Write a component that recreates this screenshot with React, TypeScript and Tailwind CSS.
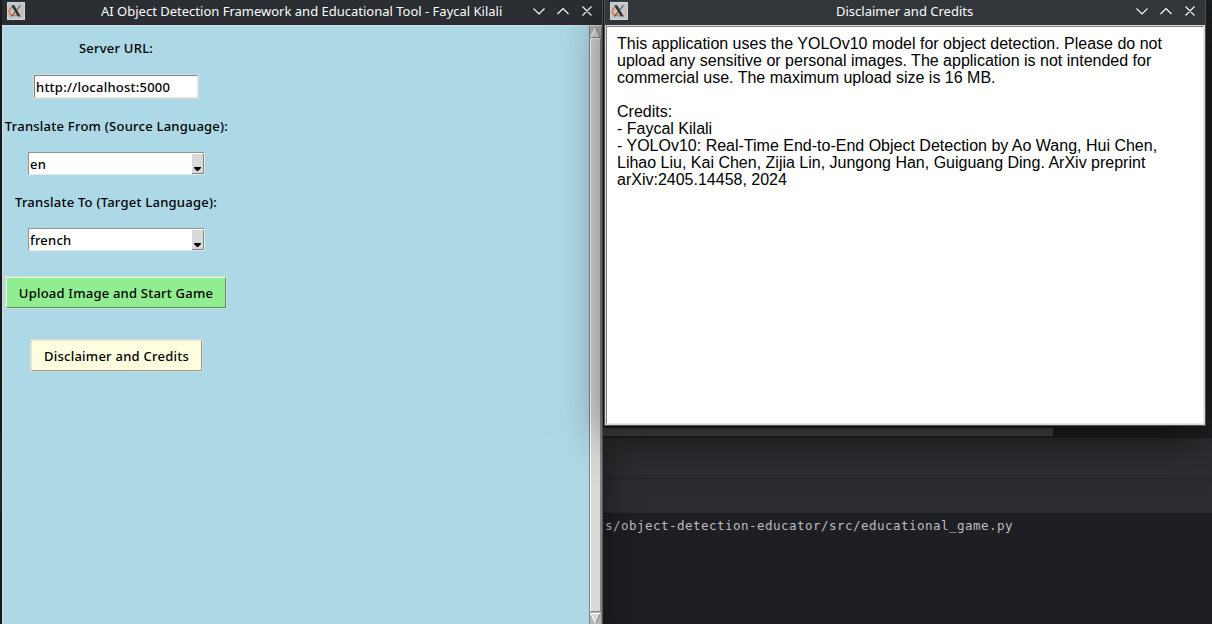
import type { ReactNode } from "react";

function XLogo() {
  return (
    <svg className="block h-[18px] w-[18px] shrink-0" viewBox="0 0 18 18">
      <rect x="0.5" y="0.5" width="17" height="17" fill="#c0c7ca" stroke="#ced3d5" />
      <path d="M7.500 5C4.500 5.200 2.300 7 2.300 9.600c0 2.600 2.200 4.200 5 4.200 2 0 3.600-.8 4.400-2" fill="none" stroke="#e5793f" strokeWidth="1.600" />
      <path d="M11.500 5.200c2.700.2 4.400 1.900 4.200 4.100-.2 2.400-2.200 4.200-5 4.500" fill="none" stroke="#e6b98c" strokeWidth="1.300" />
      <path d="M4.200 3.200h3l6.600 11.300h-3z" fill="#303438" />
      <path d="M13.600 3.200L4.400 14.500" stroke="#303438" strokeWidth="1" />
    </svg>
  );
}

function TitleBar({ title, tone, titleClass }: { title: string; tone: string; titleClass: string }) {
  return (
    <div className={`relative flex h-[25px] shrink-0 items-start justify-between pt-0.5 pl-[5px] ${tone}`}>
      <XLogo />
      <span className={`absolute top-[2px] whitespace-nowrap text-[13px] leading-[18px] text-[#fcfcfc] ${titleClass}`}>
        {title}
      </span>
      <svg className="mr-[9px] block h-[18px] w-[61px]" viewBox="0 0 61 18" fill="none" stroke="#fcfcfc" strokeWidth="1.150">
        <path d="M1.500 6.500l5.500 5.500 5.500-5.500M25.500 12l5.500-5.500L36.500 12M50.500 4.500l9 9M59.500 4.500l-9 9" />
      </svg>
    </div>
  );
}

function Label({ children, className }: { children: ReactNode; className: string }) {
  return <div className={`h-[18px] whitespace-nowrap leading-[18px] ${className}`}>{children}</div>;
}

function Select({ value, className }: { value: string; className: string }) {
  return (
    <div className={`flex h-[23px] w-[177px] border border-t-[#929292] border-r-[#e8e8e8] border-b-[#e8e8e8] border-l-[#929292] bg-white ${className}`}>
      <span className="flex-1 pl-[1.500px] leading-[23px]">{value}</span>
      <span className="mt-px flex h-5 w-[12px] items-end justify-center border-r border-b border-[#858585] bg-[#d9d9d9] pb-[2px]">
        <svg className="h-[4px] w-[7px]" viewBox="0 0 7 4">
          <path d="M0 0h7v1L4 4H3L0 1z" fill="#000" />
        </svg>
      </span>
    </div>
  );
}

function Scrollbar() {
  return (
    <div className="flex w-[13px] shrink-0 flex-col border-x border-[#828282] bg-[#b3b3b3]">
      <svg className="h-[12px] w-[11px] shrink-0" viewBox="0 0 11 12">
        <path d="M5.500 1L10.500 11.500H.5z" fill="#d9d9d9" />
        <path d="M5.500 1L.5 11.500" stroke="#fff" />
        <path d="M5.500 1l5 10.500H.5" fill="none" stroke="#828282" />
      </svg>
      <div className="flex-1 border border-t-white border-r-[#828282] border-b-[#828282] border-l-white bg-[#d9d9d9]" />
      <svg className="h-[12px] w-[11px] shrink-0" viewBox="0 0 11 12">
        <path d="M.5 1.500h10L5.500 11.500z" fill="#d9d9d9" />
        <path d="M10.500 1.500l-5 10" stroke="#828282" />
        <path d="M10.500 1.500H.5l5 10" fill="none" stroke="#fff" />
      </svg>
    </div>
  );
}

function GameWindow() {
  return (
    <section className="absolute top-0 left-[2px] flex h-[640px] w-[601px] flex-col border-r border-[#53575a] shadow-[0_14px_36px_rgba(0,0,0,0.45)]">
      <TitleBar
        title="AI Object Detection Framework and Educational Tool - Faycal Kilali"
        tone="bg-[#2a2e32]"
        titleClass="left-[99px]"
      />
      <div className="flex h-[599px] border-t border-l border-[#d9d9d9] bg-[#add8e6]">
        <div className="flex-1">
          <div className="flex w-[226px] flex-col items-center pt-[13px] text-[13px] font-medium tracking-[0.24px] text-black">
            <Label className="">Server URL:</Label>
            <div className="mt-[17px] h-[25px] w-[166px] border border-[#d9d9d9] bg-white">
              <div className="h-[23px] border border-t-[#828282] border-r-[#e8e8e8] border-b-[#e8e8e8] border-l-[#828282] pl-px leading-[23px]">
                http://localhost:5000
              </div>
            </div>
            <Label className="mt-[18px] pl-px">Translate From (Source Language):</Label>
            <Select value="en" className="mt-[17px]" />
            <Label className="mt-[18px]">Translate To (Target Language):</Label>
            <Select value="french" className="mt-[17px]" />
            <button className="mt-[25px] h-[33px] w-[222px] shrink-0 border border-[#d9d9d9] tracking-[0.22px]">
              <span className="block h-[31px] border border-t-[#d9ffd9] border-r-[#579057] border-b-[#579057] border-l-[#d9ffd9] bg-[#90ee90] leading-[31px] whitespace-nowrap">
                Upload Image and Start Game
              </span>
            </button>
            <button className="mt-[30px] h-[33px] w-[173px] shrink-0 border border-[#d9d9d9] tracking-[0.24px]">
              <span className="block h-[31px] border border-t-[#e9e9d2] border-r-[#999987] border-b-[#999987] border-l-[#e9e9d2] bg-[#ffffe0] pl-px leading-[30px] whitespace-nowrap">
                Disclaimer and Credits
              </span>
            </button>
          </div>
        </div>
        <Scrollbar />
      </div>
    </section>
  );
}

function DisclaimerWindow() {
  return (
    <section className="absolute top-0 left-[605px] flex h-[425px] w-[600px] flex-col shadow-[0_0_0_1px_#4c5155,0_12px_40px_rgba(0,0,0,0.55)]">
      <TitleBar title="Disclaimer and Credits" tone="bg-[#31363b]" titleClass="left-[231px]" />
      <div className="flex-1 border border-[#d9d9d9] bg-white">
        <div className="h-full border border-t-[#828282] border-r-[#e8e8e8] border-b-[#e8e8e8] border-l-[#828282] pt-[8px] pl-[10px] font-['Liberation_Sans',sans-serif] text-[16px] leading-[17px] whitespace-pre text-black">
          {`This application uses the YOLOv10 model for object detection. Please do not
upload any sensitive or personal images. The application is not intended for
commercial use. The maximum upload size is 16 MB.

Credits:
- Faycal Kilali
- YOLOv10: Real-Time End-to-End Object Detection by Ao Wang, Hui Chen,
Lihao Liu, Kai Chen, Zijia Lin, Jungong Han, Guiguang Ding. ArXiv preprint
arXiv:2405.14458, 2024`}
        </div>
      </div>
    </section>
  );
}

function EditorBackdrop() {
  return (
    <div className="flex h-full flex-col bg-[#1e1f22]">
      <div className="flex h-[438px] shrink-0 items-end pb-[2px] pl-[2px]">
        <div className="h-[8px] w-[1051px] bg-[#464647]" />
      </div>
      <div className="h-[41px] shrink-0 border-b border-[#1e1f22] bg-[#2b2d30]" />
      <div className="h-[34px] shrink-0 bg-[#2b2d30]" />
      <div className="flex-1 pt-[4px] pl-[597px] font-['DejaVu_Sans_Mono',monospace] text-[12.5px] leading-[18px] tracking-[0.475px] whitespace-pre text-[#bcbec4]">
        ts/object-detection-educator/src/educational_game.py
      </div>
    </div>
  );
}

export default function App() {
  return (
    <main className="relative h-[624px] w-[1212px] overflow-hidden bg-[#1e1f22] font-['Noto_Sans',sans-serif]">
      <EditorBackdrop />
      <GameWindow />
      <DisclaimerWindow />
    </main>
  );
}
